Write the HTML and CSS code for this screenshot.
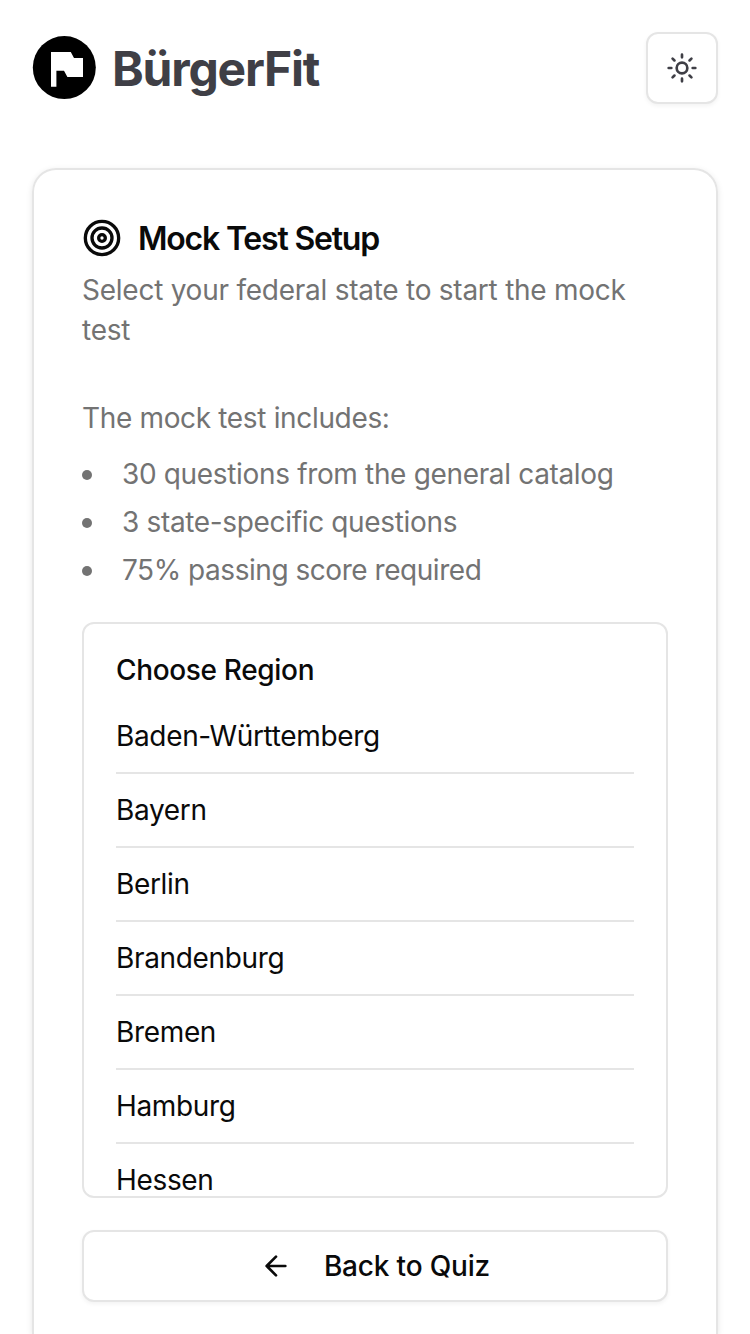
FILE: index.html
```html
<!DOCTYPE html>
<html lang="en">
<head>
<meta charset="utf-8">
<title>BürgerFit</title>
<link rel="stylesheet" href="styles.css">
</head>
<body>
<header class="header">
  <div class="brand">
    <svg class="logo" viewBox="0 0 64 64"><circle cx="32.300" cy="31.600" r="31.500" fill="#000"/><path d="M19 16H38.800L42 22H51V41H35.400L32 34.700H24.400V50.700H19Z" fill="#fff"/></svg>
    <span class="brand-name">BürgerFit</span>
  </div>
  <button class="theme" aria-label="Theme"><svg viewBox="0 0 24 24"><circle cx="12" cy="12" r="4"/><path d="M12 2v2M12 20v2M4.930 4.930l1.410 1.410M17.660 17.660l1.410 1.410M2 12h2M20 12h2M6.340 17.660l-1.410 1.410M19.070 4.930l-1.410 1.410"/></svg></button>
</header>
<main class="card">
  <h1 class="title"><svg viewBox="0 0 24 24"><circle cx="12" cy="12" r="10"/><circle cx="12" cy="12" r="6"/><circle cx="12" cy="12" r="2"/></svg><span class="title-text">Mock Test Setup</span></h1>
  <p class="desc">Select your federal state to start the mock test</p>
  <p class="intro">The mock test includes:</p>
  <ul class="facts">
    <li><span>30 questions from the general catalog</span></li>
    <li><span>3 state-specific questions</span></li>
    <li class="score"><span>75% passing score required</span></li>
  </ul>
  <section class="regions">
    <h2 class="regions-title">Choose Region</h2>
    <div class="region">Baden-Württemberg</div>
    <div class="region">Bayern</div>
    <div class="region">Berlin</div>
    <div class="region">Brandenburg</div>
    <div class="region">Bremen</div>
    <div class="region">Hamburg</div>
    <div class="region">Hessen</div>
  </section>
  <button class="back"><svg viewBox="0 0 24 24"><path d="m12 19-7-7 7-7M19 12H5"/></svg><span>Back to Quiz</span></button>
</main>
</body>
</html>
```
FILE: styles.css
```css
* { box-sizing: border-box; margin: 0; padding: 0; }
body { font-family: Inter, sans-serif; font-size: 28px; line-height: 40px; letter-spacing: -.34px; color: #0a0a0a; background: #fff; height: 1334px; overflow: hidden; }
svg { fill: none; stroke: currentColor; stroke-width: 2; stroke-linecap: round; stroke-linejoin: round; flex: none; }
button { font: inherit; color: inherit; background: #fff; border: 2px solid #e5e5e5; box-shadow: 0 2px 4px rgba(0,0,0,.05); display: flex; align-items: center; justify-content: center; }
.header { height: 136px; padding: 0 32px; display: flex; align-items: center; justify-content: space-between; }
.brand { display: flex; align-items: center; gap: 16px; }
.logo { width: 64px; height: 64px; stroke: none; }
.brand-name { padding-top: 2px; font-size: 48px; font-weight: 700; letter-spacing: -1.2px; color: #3f3f46; }
.theme { width: 72px; height: 72px; border-radius: 12px; color: #3f3f46; }
.theme svg { width: 32px; height: 32px; }
.card { margin: 32px 32px 0; height: 1166px; padding: 46px 48px 0; border: 2px solid #e5e5e5; border-bottom: 0; border-radius: 24px 24px 0 0; box-shadow: 0 2px 6px rgba(0,0,0,.1); }
.title { display: flex; align-items: center; gap: 16px; height: 44px; font-size: 32px; font-weight: 600; letter-spacing: -1.2px; }
.title-text { padding-top: 2px; }
.title svg { width: 40px; height: 40px; }
.desc { margin-top: 10px; color: #737373; letter-spacing: -.25px; }
.intro { margin-top: 48px; color: #737373; }
.facts { list-style: none; margin-top: 16px; color: #737373; display: flex; flex-direction: column; gap: 8px; }
.facts li { display: flex; align-items: center; gap: 30px; }
.facts li::before { content: ""; width: 10px; height: 10px; margin-top: 2px; border-radius: 50%; background: #737373; }
.score { letter-spacing: -.46px; }
.regions { margin-top: 32px; height: 576px; padding: 32px 32px 0; border: 2px solid #e5e5e5; border-radius: 12px; overflow: hidden; }
.regions-title { font-size: 28px; line-height: 28px; font-weight: 500; margin-bottom: 16px; }
.region { height: 74px; padding-top: 16px; border-bottom: 2px solid #e5e5e5; }
.region:last-child { height: 56px; border-bottom: 0; }
.back { width: 100%; height: 72px; margin-top: 32px; border-radius: 12px; font-weight: 500; letter-spacing: -.17px; gap: 36px; }
.back svg { width: 32px; height: 32px; margin-right: -4px; }
```
